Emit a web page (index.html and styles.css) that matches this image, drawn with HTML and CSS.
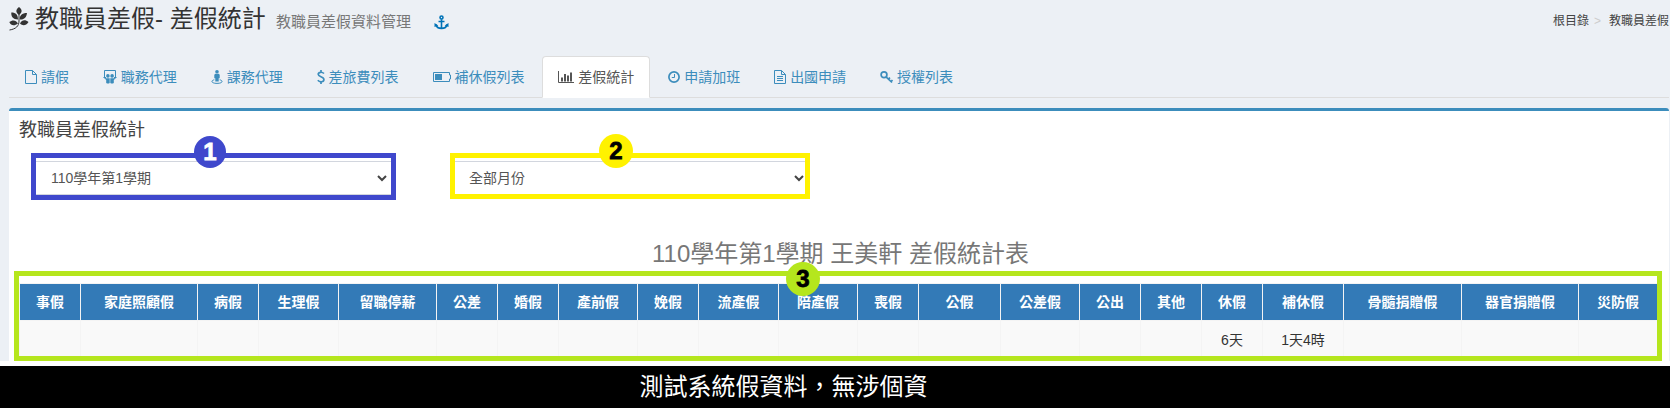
FILE: index.html
```html
<!DOCTYPE html>
<html lang="zh-Hant">
<head>
<meta charset="utf-8">
<title>差假統計</title>
<link rel="stylesheet" href="styles.css">
</head>
<body>
<div class="page">
  <header class="page-header">
    <svg class="leaf" viewBox="0 0 20 24"><path d="M10 0C13.500 2.500 13.500 5.500 10 8C6.500 5.500 6.500 2.500 10 0ZM9 12.500C4 12.500 2 9.500 2.300 5.500C7 5.500 9 8 9 12.500ZM10.800 12.500C10.500 8.500 13 6 18 6C17.500 10.500 15 13 10.800 12.500ZM9 16.500C5 19.500 2 18.500 .3 15C3.500 12.500 7 12.800 9 16.500ZM11 16.500C13 12.500 16.500 12.500 19.500 15C17 19 13.500 19 11 16.500Z"/><path class="line" d="M10 6V14C10 19 7 22 .5 23"/></svg>
    <h1 class="title">教職員差假- 差假統計</h1>
    <span class="subtitle">教職員差假資料管理</span>
    <svg class="anchor" viewBox="0 0 15 15"><path class="line" d="M7.500 4.200V13.500M4.500 6.500H10.500M2 9.500C2.500 12.300 4.800 13.400 7.500 13.400S12.500 12.300 13 9.500"/><circle class="line" cx="7.500" cy="2.500" r="1.500"/><path d="M.5 12V8L4.300 10.500ZM14.500 12V8L10.700 10.500Z"/></svg>
    <nav class="breadcrumb"><span>根目錄</span><span class="sep">&gt;</span><span>教職員差假</span></nav>
  </header>

  <nav class="tabs">
    <a class="tab"><svg width="12" height="14" viewBox="0 0 12 14"><path class="line" d="M.5 .5H7.500L11.500 4.500V13.500H.5ZM7.500 .5V4.500H11.500"/></svg>請假</a>
    <a class="tab"><svg width="14" height="14" viewBox="0 0 14 14"><path class="line" d="M1.500 7V.5H12.500V7M.5 7.500H3M11 7.500H13.500"/><circle cx="4.900" cy="5.900" r="1.800"/><circle cx="9.100" cy="5.900" r="1.800"/><path d="M.5 7.500L3 8.200H6.700V13Q5 14 3.200 13V10ZM13.500 7.500L11 8.200H7.300V13Q9 14 10.800 13V10Z"/></svg>職務代理</a>
    <a class="tab"><svg width="12" height="14" viewBox="0 0 12 14"><circle cx="6" cy="1.800" r="1.800"/><path d="M4.300 3.800H7.700L8.700 4.800V8.300H7.700V11.500H4.300V8.300H3.300V4.800Z"/><path class="line" d="M3.300 9.800C-.5 10.500 .2 13.400 6 13.400S12.500 10.500 8.700 9.800"/></svg>課務代理</a>
    <a class="tab"><svg width="8" height="14" viewBox="0 0 8 14"><path class="bold" d="M7 3.500C5 1.500 1.200 2 1.200 4.300C1.200 7.200 6.900 6.300 6.900 9.500C6.900 12.200 2.800 12.600 .8 10.300M4 0V2.500M4 11.500V14"/></svg>差旅費列表</a>
    <a class="tab"><svg width="18" height="14" viewBox="0 0 18 14"><path class="line" d="M.5 2.500H16.500V5H17.500V9H16.500V11.500H.5Z"/><path d="M2 4H9V10H2Z"/></svg>補休假列表</a>
    <a class="tab active"><svg width="16" height="14" viewBox="0 0 16 14"><path class="line" d="M.5 1V12.500H16"/><path d="M3 7.500H5V11.500H3ZM6 4H8V11.500H6ZM9 5.500H11V11.500H9ZM12 2.500H14V11.500H12Z"/></svg>差假統計</a>
    <a class="tab"><svg width="12" height="14" viewBox="0 0 12 14"><circle class="bold" cx="6" cy="7" r="5.100"/><path class="line" d="M6.500 4V7.500H3.800"/></svg>申請加班</a>
    <a class="tab"><svg width="12" height="14" viewBox="0 0 12 14"><path class="line" d="M.5 .5H7.500L11.500 4.500V13.500H.5ZM7.500 .5V4.500H11.500M3 6.500H9M3 8.500H9M3 10.500H9"/></svg>出國申請</a>
    <a class="tab"><svg width="13" height="14" viewBox="0 0 13 14"><circle class="bold" cx="4" cy="4.800" r="2.900"/><path class="bold" d="M6 6.800L12 12.500M8 9.500L10 7.700M10.500 12L12.500 10"/></svg>授權列表</a>
  </nav>

  <main class="box">
    <h2 class="box-title">教職員差假統計</h2>
    <div class="filters">
      <div class="mark blue"><div class="select"><span>110學年第1學期</span><svg class="caret" viewBox="0 0 10 7"><path d="M1 1L5 5L9 1"/></svg></div><b class="badge">1</b></div>
      <div class="mark yellow"><div class="select"><span>全部月份</span><svg class="caret" viewBox="0 0 10 7"><path d="M1 1L5 5L9 1"/></svg></div><b class="badge">2</b></div>
    </div>
    <h3 class="caption">110學年第1學期 王美軒 差假統計表</h3>
    <div class="mark green">
      <table class="stats">
        <colgroup><col class="w61"><col class="w117"><col class="w61"><col class="w80"><col class="w98"><col class="w61"><col class="w61"><col class="w79"><col class="w61"><col class="w80"><col class="w79"><col class="w61"><col class="w82"><col class="w79"><col class="w61"><col class="w61"><col class="w61"><col class="w81"><col class="w118"><col class="w117"><col class="w79"></colgroup>
        <thead><tr><th>事假</th><th>家庭照顧假</th><th>病假</th><th>生理假</th><th>留職停薪</th><th>公差</th><th>婚假</th><th>產前假</th><th>娩假</th><th>流產假</th><th>陪產假</th><th>喪假</th><th>公假</th><th>公差假</th><th>公出</th><th>其他</th><th>休假</th><th>補休假</th><th>骨髓捐贈假</th><th>器官捐贈假</th><th>災防假</th></tr></thead>
        <tbody><tr><td></td><td></td><td></td><td></td><td></td><td></td><td></td><td></td><td></td><td></td><td></td><td></td><td></td><td></td><td></td><td></td><td>6天</td><td>1天4時</td><td></td><td></td><td></td></tr></tbody>
      </table>
      <b class="badge">3</b>
    </div>
  </main>
</div>
<footer class="notice">測試系統假資料，無涉個資</footer>
</body>
</html>
```
FILE: styles.css
```css
* { box-sizing: border-box; }
body {
  margin: 0;
  height: 408px;
  overflow: hidden;
  display: flex;
  flex-direction: column;
  background: #fff;
  color: #333;
  font: 14px/20px "Liberation Sans", "Noto Sans CJK TC", sans-serif;
}
h1, h2, h3 { margin: 0; font-weight: 400; }
svg { flex: none; fill: currentColor; }
.line { fill: none; stroke: currentColor; stroke-width: 1; }
.bold { fill: none; stroke: currentColor; stroke-width: 1.7; }

.page { height: 361px; padding: 0 1px 0 9px; background: #ecf0f5; }
.page-header { display: flex; height: 56px; white-space: nowrap; }
.leaf { width: 20px; height: 24px; margin: 7px 6px 0 0; }
.title { width: 241px; font-size: 24px; line-height: 37px; }
.subtitle { width: 158px; font-size: 15px; line-height: 43px; color: #777; }
.anchor { width: 15px; height: 15px; margin-top: 15px; color: #0073b7; }
.anchor .line { stroke-width: 1.6; }
.breadcrumb { display: flex; margin-left: auto; font-size: 12px; line-height: 42px; color: #444; }
.sep { padding: 0 8px 0 5px; color: #ccc; }

.tabs { display: flex; gap: 2px; height: 42px; border-bottom: 1px solid #ddd; }
.tab {
  display: flex;
  align-items: center;
  gap: 3.9px;
  height: 42px;
  padding: 0 15px;
  border: 1px solid transparent;
  color: #3c8dbc;
  white-space: nowrap;
}
.tab.active { background: #fff; border-color: #ddd #ddd #fff; border-radius: 4px 4px 0 0; color: #555; }

.box { height: 253px; margin-top: 10px; border-top: 3px solid #3c8dbc; border-radius: 3px 3px 0 0; background: #fff; }
.box-title { height: 42px; padding-left: 10px; font-size: 18px; line-height: 38px; color: #444; }
.filters { display: flex; gap: 54px; padding-left: 22px; }
.mark { position: relative; }
.mark::after { content: ""; position: absolute; inset: 0; border: 5px solid var(--mark); pointer-events: none; }
.blue { --mark: #3f48cc; width: 365px; height: 47px; }
.yellow { --mark: #fff200; width: 360px; height: 46px; }
.green { --mark: #b5e61d; width: 1648px; height: 90px; margin-left: 5px; padding: 12px 5px 5px 5px; }
.select {
  display: flex;
  align-items: center;
  justify-content: space-between;
  height: 34px;
  margin: 8px 5px 0;
  padding: 0 4px 0 15px;
  border: solid #d2d6de;
  border-width: 1px 0;
  color: #555;
}
.yellow .select { padding: 0 1px 0 14px; }
.caret { width: 10px; height: 7px; fill: none; stroke: #444; stroke-width: 2; }
.badge {
  position: absolute;
  z-index: 1;
  display: flex;
  align-items: center;
  justify-content: center;
  width: 34px;
  height: 34px;
  border-radius: 50%;
  background: var(--mark);
  color: #000;
  font: 700 24px/1 "Liberation Sans", sans-serif;
  -webkit-text-stroke: 0.8px currentColor;
}
.blue .badge { left: 163px; top: -17px; width: 32px; height: 32px; color: #fff; }
.yellow .badge { left: 149px; top: -19px; }
.green .badge { left: 772px; top: -9px; }

.caption { height: 71px; padding: 37px 0 0 3px; font-size: 24px; line-height: 34px; color: #777; text-align: center; }
.stats { width: 1638px; table-layout: fixed; border-collapse: collapse; text-align: center; }
.stats th { height: 37px; padding: 0; border: 1px solid #f4f4f4; background: #337ab7; color: #fff; font-weight: 700; }
.stats td { height: 38px; padding: 0; border: 1px solid #f4f4f4; background: #f9f9f9; }
.w61 { width: 61px; } .w79 { width: 79px; } .w80 { width: 80px; }
.w81 { width: 81px; } .w82 { width: 82px; } .w98 { width: 98px; } .w117 { width: 117px; } .w118 { width: 118px; }

.notice { height: 42px; margin-top: 5px; padding-right: 103px; background: #000; color: #fff; font-size: 24px; line-height: 42px; text-align: center; }
```
